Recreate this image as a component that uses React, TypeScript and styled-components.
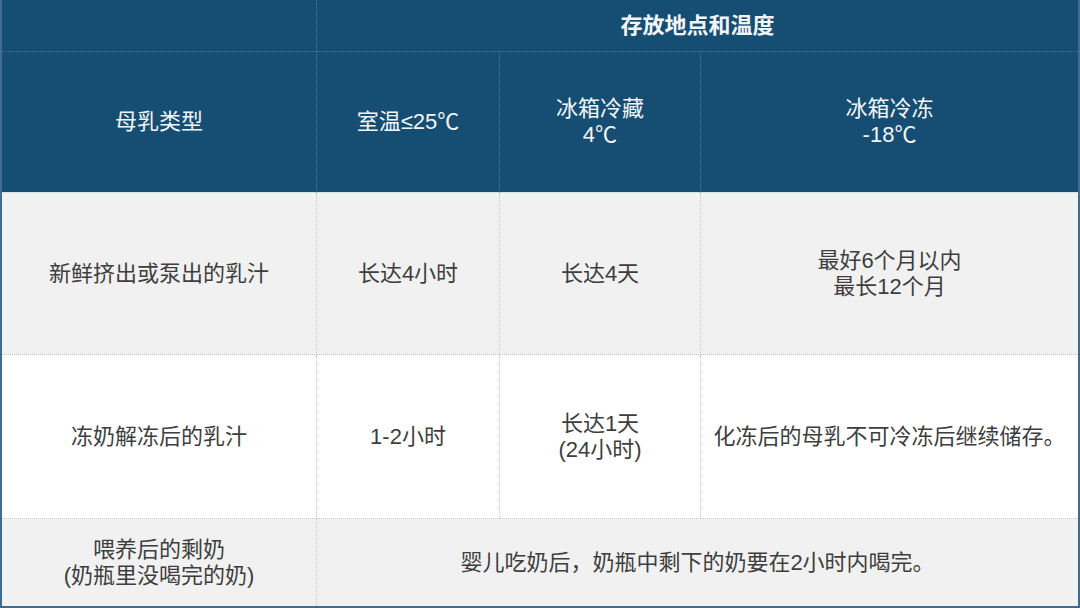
import React from "react";
import styled, { createGlobalStyle } from "styled-components";

const GlobalStyle = createGlobalStyle`
  html, body {
    margin: 0;
    padding: 0;
    background: #ffffff;
  }
  body {
    font-family: "Liberation Sans", "Noto Sans CJK SC", sans-serif;
  }
`;

type Tone = "head" | "gray" | "white";

const Table = styled.div`
  width: 1080px;
  height: 608px;
  box-sizing: border-box;
  display: grid;
  grid-template-columns: 315px 183px 201px 1fr;
  grid-template-rows: 52px 141px 162px 164px 1fr;
  border-left: 2px solid #3f6d91;
  border-right: 2px solid #3f6d91;
  border-bottom: 2px solid #3f6d91;
  background: #f1f1f1;
`;

const Cell = styled.div<{ $tone: Tone; $span?: number; $last?: boolean; $bold?: boolean }>`
  grid-column: span ${(p) => p.$span ?? 1};
  display: flex;
  align-items: center;
  justify-content: center;
  text-align: center;
  font-size: 22px;
  line-height: 26px;
  font-weight: ${(p) => (p.$bold ? 700 : 400)};
  box-sizing: border-box;
  background: ${(p) =>
    p.$tone === "head" ? "#164d72" : p.$tone === "gray" ? "#f1f1f1" : "#ffffff"};
  color: ${(p) => (p.$tone === "head" ? "#f2f6f9" : "#3e3e3e")};
  border-right: ${(p) =>
    p.$last ? "none" : p.$tone === "head" ? "1px dotted #4d7899" : "1px dotted #c8c8c8"};
  border-bottom: ${(p) => (p.$tone === "head" ? "1px dotted #4d7899" : "1px dotted #c8c8c8")};
`;

const HeadEnd = styled(Cell)`
  border-bottom: 1px solid #cfe3ef;
`;

const LastRowCell = styled(Cell)`
  border-bottom: none;
`;

const Lines = ({ items }: { items: string[] }) => (
  <div>
    {items.map((t) => (
      <div key={t}>{t}</div>
    ))}
  </div>
);

export default function App() {
  return (
    <>
      <GlobalStyle />
      <Table>
        <Cell $tone="head" />
        <Cell $tone="head" $span={3} $last $bold>
          存放地点和温度
        </Cell>

        <HeadEnd $tone="head">母乳类型</HeadEnd>
        <HeadEnd $tone="head">室温≤25℃</HeadEnd>
        <HeadEnd $tone="head">
          <Lines items={["冰箱冷藏", "4℃"]} />
        </HeadEnd>
        <HeadEnd $tone="head" $last>
          <Lines items={["冰箱冷冻", "-18℃"]} />
        </HeadEnd>

        <Cell $tone="gray">新鲜挤出或泵出的乳汁</Cell>
        <Cell $tone="gray">长达4小时</Cell>
        <Cell $tone="gray">长达4天</Cell>
        <Cell $tone="gray" $last>
          <Lines items={["最好6个月以内", "最长12个月"]} />
        </Cell>

        <Cell $tone="white">冻奶解冻后的乳汁</Cell>
        <Cell $tone="white">1-2小时</Cell>
        <Cell $tone="white">
          <Lines items={["长达1天", "(24小时)"]} />
        </Cell>
        <Cell $tone="white" $last>
          化冻后的母乳不可冷冻后继续储存。
        </Cell>

        <LastRowCell $tone="gray">
          <Lines items={["喂养后的剩奶", "(奶瓶里没喝完的奶)"]} />
        </LastRowCell>
        <LastRowCell $tone="gray" $span={3} $last>
          婴儿吃奶后，奶瓶中剩下的奶要在2小时内喝完。
        </LastRowCell>
      </Table>
    </>
  );
}
